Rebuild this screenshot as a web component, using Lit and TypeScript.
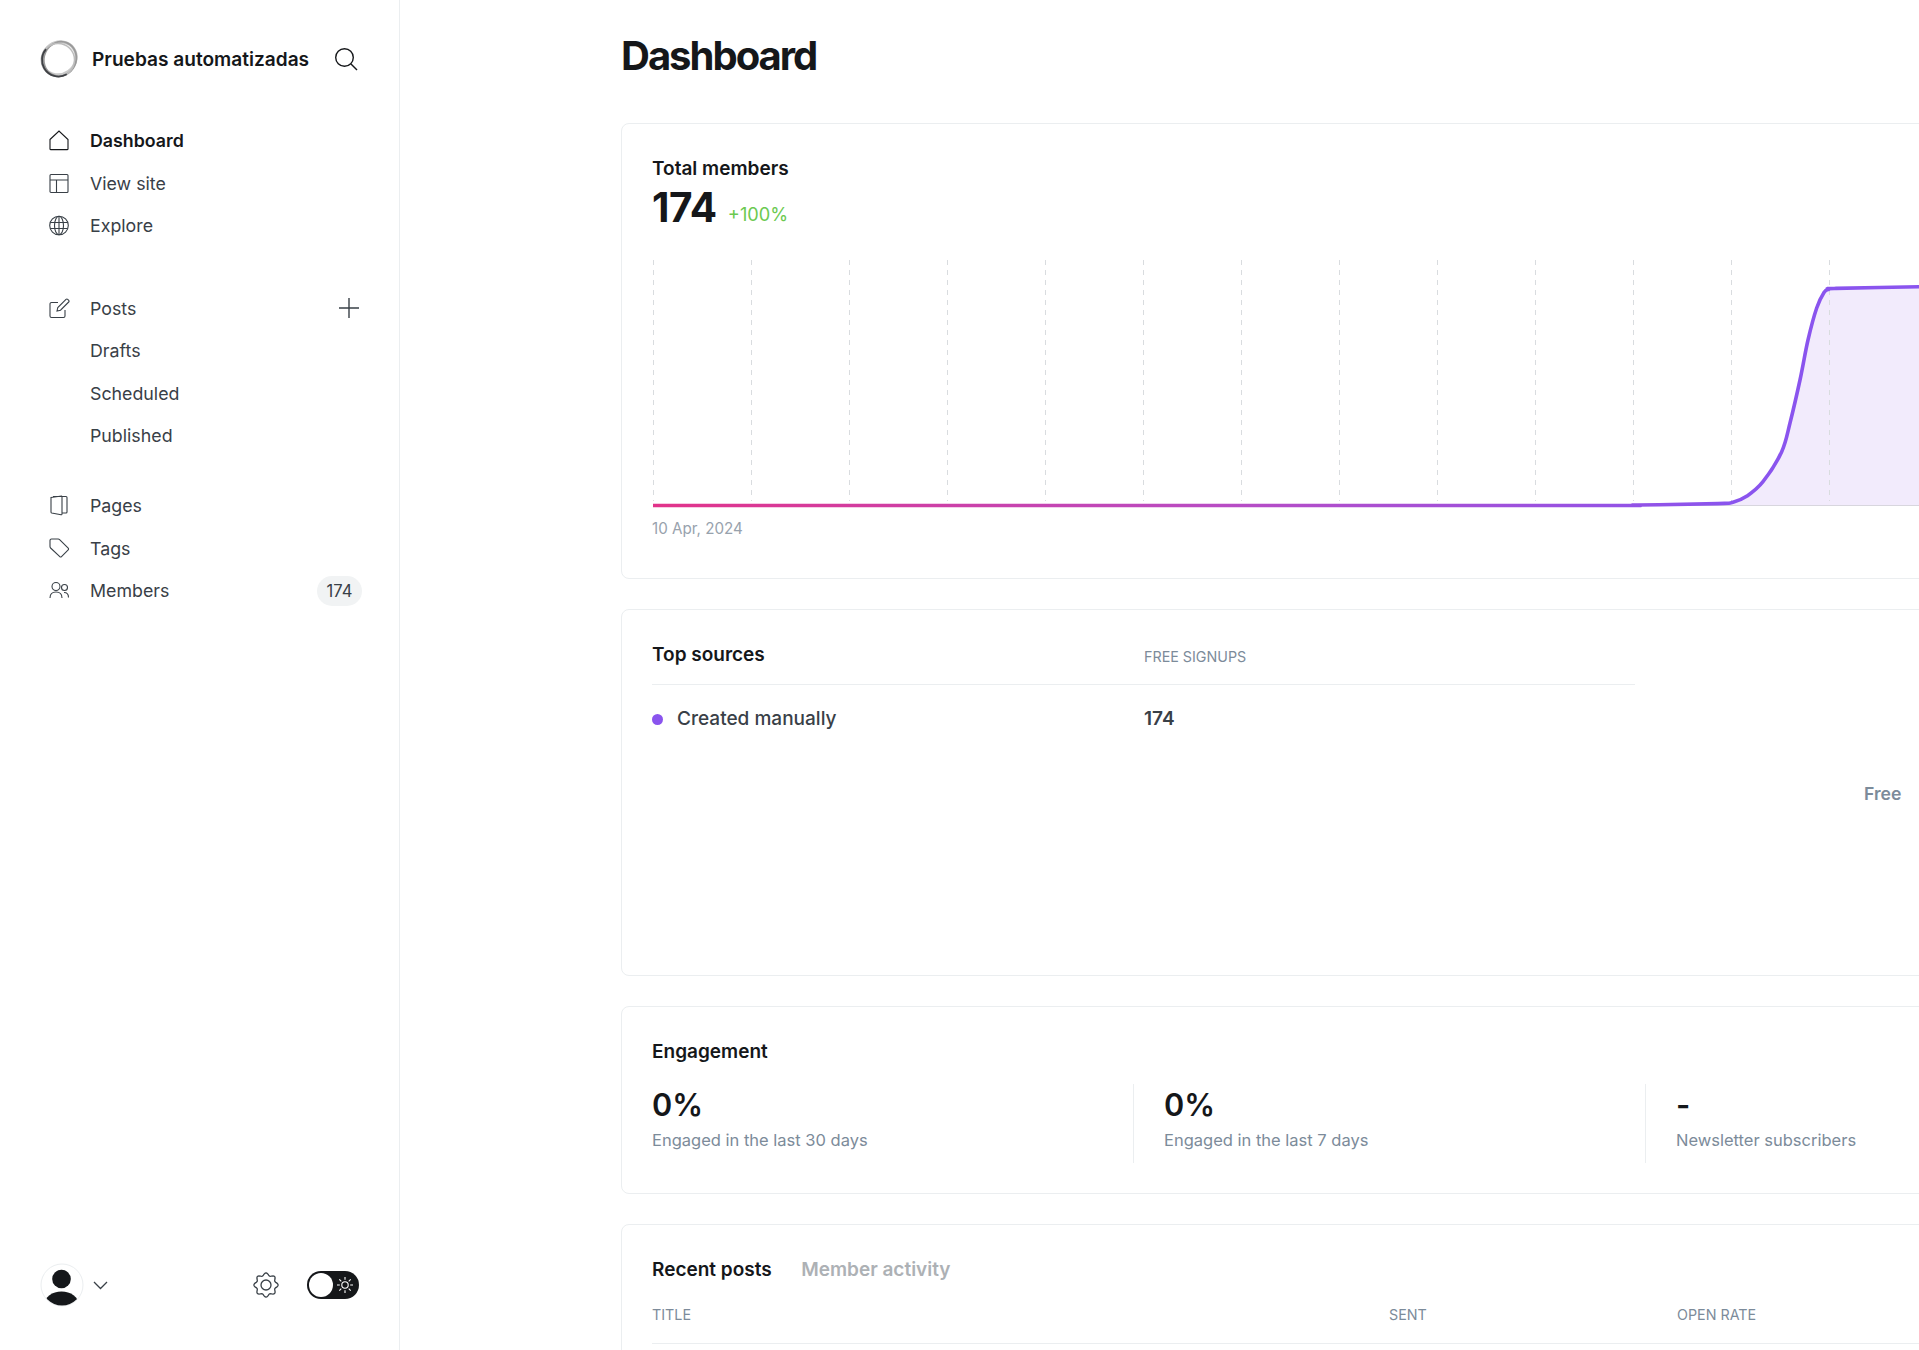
import { LitElement, html, css, svg } from "lit";
import { customElement } from "lit/decorators.js";

const GRID_X = [0, 98, 196, 294, 392, 490, 588, 686, 784, 882, 980, 1078, 1176];

// curve points read off the chart, x/y inside the svg
const POINTS: [number, number][] = [
  [0, 245.5],
  [890, 245.5],
  [985, 245],
  [1065, 243.6],
  [1080, 242.2],
  [1094, 236],
  [1110, 221.7],
  [1128.7, 191.7],
  [1137, 163],
  [1147, 120],
  [1155, 80],
  [1163.7, 48],
  [1171, 32.5],
  [1176, 29.2],
  [1183, 28.4],
  [1270, 26.7],
];

function smooth(pts: [number, number][]) {
  let d = `M${pts[0][0]} ${pts[0][1]}`;
  for (let i = 0; i < pts.length - 1; i++) {
    const p0 = pts[i - 1] ?? pts[i];
    const p1 = pts[i];
    const p2 = pts[i + 1];
    const p3 = pts[i + 2] ?? p2;
    const c1x = p1[0] + (p2[0] - p0[0]) / 6;
    const c1y = p1[1] + (p2[1] - p0[1]) / 6;
    const c2x = p2[0] - (p3[0] - p1[0]) / 6;
    const c2y = p2[1] - (p3[1] - p1[1]) / 6;
    d += ` C${c1x.toFixed(1)} ${c1y.toFixed(1)} ${c2x.toFixed(1)} ${c2y.toFixed(1)} ${p2[0]} ${p2[1]}`;
  }
  return d;
}

const LINE = smooth(POINTS);
const AREA = `${LINE} L1270 245.5 L1078 245.5 Z`;

function gearPath() {
  const pts: string[] = [];
  for (let i = 0; i < 96; i++) {
    const a = (i / 96) * Math.PI * 2;
    const r = 10.8 + 1.3 * Math.cos(a * 8);
    pts.push(`${(13 + r * Math.sin(a)).toFixed(2)} ${(13 - r * Math.cos(a)).toFixed(2)}`);
  }
  return `M${pts.join("L")}Z`;
}

const icons = {
  home: svg`<path d="M1 9.5 10 1l9 8.5V19a.6.6 0 0 1-.6.6H1.600A.6.6 0 0 1 1 19Z"/>`,
  site: svg`<rect x="1" y="1.500" width="18" height="18" rx="1"/><path d="M1 7h18M7.500 7v12.500"/>`,
  globe: svg`<circle cx="10" cy="10.500" r="9.300"/><ellipse cx="10" cy="10.500" rx="4.500" ry="9.300"/><path d="M10 1.200v18.600M1.300 7.500h17.400M1.300 13.500h17.400"/>`,
  post: svg`<path d="M16 12v6a1.500 1.500 0 0 1-1.500 1.500h-12A1.500 1.500 0 0 1 1 18V6a1.500 1.500 0 0 1 1.500-1.500H9"/><path d="M8 13l.8-3.500L17 1.300a1.200 1.200 0 0 1 1.700 0l1 1a1.200 1.200 0 0 1 0 1.700L11.500 12.200Z"/>`,
  page: svg`<path d="M2 2.500 12.500 1a.8.8 0 0 1 .5.800V19a.7.7 0 0 1-.9.700L2.700 18a1 1 0 0 1-.7-1Z"/><path d="M4 1.500h13a1 1 0 0 1 1 1V17a1 1 0 0 1-1 1h-4"/>`,
  tag: svg`<path d="M1 2.500A1.500 1.500 0 0 1 2.500 1h6.700a2 2 0 0 1 1.400.6l8.600 8.600a1.200 1.200 0 0 1 0 1.700l-6.700 6.700a1.200 1.200 0 0 1-1.700 0L1.600 10A2 2 0 0 1 1 8.600Z"/>`,
  members: svg`<circle cx="7" cy="6.500" r="4"/><path d="M1 18c0-4 2.500-6 6-6s6 2 6 6"/><circle cx="15.500" cy="7.500" r="3"/><path d="M15 12.500c2.800 0 4.500 1.800 4.500 5"/>`,
};

@customElement("app-root")
export class AppRoot extends LitElement {
  static styles = css`
    :host {
      display: flex;
      height: 100vh;
      overflow: hidden;
      background: #fff;
      font-family: Inter, "Liberation Sans", sans-serif;
      color: #15171a;
    }
    .side {
      flex: none;
      width: 400px;
      box-sizing: border-box;
      height: 100%;
      border-right: 1px solid #ebeef0;
      display: flex;
      flex-direction: column;
      padding: 38px 40px 0 40px;
    }
    .brand {
      display: flex;
      align-items: center;
      height: 42px;
      margin-bottom: 39.5px;
    }
    .brand svg.logo {
      flex: none;
      margin-right: 14px;
    }
    .brand span {
      flex: 1;
      font-size: 19.1px;
      font-weight: 600;
      white-space: nowrap;
    }
    .nav-group {
      margin-bottom: 40.6px;
    }
    .nav-group.tight {
      margin-bottom: 27.8px;
    }
    .row {
      display: flex;
      align-items: center;
      height: 42.4px;
      font-size: 17.8px;
      color: #394047;
    }
    .row.active {
      color: #15171a;
      font-weight: 600;
    }
    .row svg.ico {
      flex: none;
      width: 21px;
      height: 21px;
      margin: 0 20px 0 9px;
      fill: none;
      stroke: #394047;
      stroke-width: 1.1;
      overflow: visible;
    }
    .row.active svg.ico {
      stroke: #15171a;
    }
    .row.sub {
      padding-left: 50px;
    }
    .row .grow {
      flex: 1;
    }
    .plus {
      margin-right: -0.5px;
    }
    .badge {
      background: #f1f3f4;
      color: #394047;
      font-size: 16.6px;
      height: 30px;
      line-height: 30px;
      padding: 0 9.5px;
      border-radius: 15px;
      margin-right: -3px;
    }
    .search {
      margin-right: 1px;
    }
    .foot {
      margin-top: auto;
      height: 44px;
      margin-bottom: 43px;
      display: flex;
      align-items: center;
    }
    .foot .chev {
      margin-left: 9px;
      flex: 1;
    }
    .toggle {
      flex: none;
      width: 52px;
      height: 28px;
      margin-left: 28px;
      background: #15171a;
      border-radius: 14px;
      display: flex;
      align-items: center;
      justify-content: space-between;
      padding: 0 6px 0 2px;
      box-sizing: border-box;
    }
    .knob {
      width: 24px;
      height: 24px;
      border-radius: 50%;
      background: #fff;
    }
    .main {
      flex: none;
      width: 1480px;
      box-sizing: border-box;
      padding: 32px 0 0 221px;
    }
    h1 {
      margin: 0 0 43px;
      font-size: 40px;
      line-height: 48px;
      font-weight: 700;
      letter-spacing: -0.05em;
    }
    .card {
      box-sizing: border-box;
      width: 1500px;
      border: 1px solid #ebeef0;
      border-radius: 8px;
      margin-bottom: 30px;
      padding: 32px 30px 0;
    }
    .c1 { height: 456px; padding-top: 33px; }
    .c2 { height: 367px; position: relative; }
    .c3 { height: 188px; padding-top: 33px; }
    .c4 { height: 300px; padding-top: 33px; }
    h3 {
      margin: 0;
      font-size: 19px;
      line-height: 24px;
      font-weight: 600;
    }
    .big {
      display: flex;
      align-items: baseline;
      margin-top: 3px;
      height: 48px;
      font-size: 40.5px;
      font-weight: 700;
      line-height: 48px;
      letter-spacing: -0.01em;
    }
    .big small {
      margin-left: 11px;
      font-size: 18.2px;
      font-weight: 400;
      letter-spacing: 0;
      color: #6bc950;
      position: relative;
      top: -1px;
    }
    .chart {
      display: block;
      margin: 28px 0 0 1px;
      overflow: visible;
    }
    .date {
      margin-top: 12px;
      font-size: 15.2px;
      line-height: 22px;
      color: #98a2ad;
    }
    .src-head {
      display: grid;
      grid-template-columns: 492px 491px;
      width: 983px;
      height: 41px;
      align-items: start;
      border-bottom: 1px solid #ebeef0;
      margin-top: 1px;
    }
    .col-label {
      font-size: 14.3px;
      line-height: 24px;
      color: #7c8b9a;
      margin-top: 2px;
      text-transform: uppercase;
    }
    .src-row {
      display: grid;
      grid-template-columns: 492px 491px;
      width: 983px;
      height: 66px;
      align-items: center;
      font-size: 19.05px;
      color: #394047;
    }
    .src-name {
      display: flex;
      align-items: center;
      font-weight: 500;
    }
    .dot {
      width: 11px;
      height: 11px;
      border-radius: 50%;
      background: #8a54ee;
      margin-right: 14px;
      position: relative;
      top: 1px;
    }
    .num {
      font-weight: 600;
    }
    .legend {
      position: absolute;
      left: 1242px;
      top: 172px;
      font-size: 17.6px;
      font-weight: 600;
      line-height: 24px;
      color: #7c8b9a;
    }
    .stats {
      display: flex;
      margin-top: 20px;
    }
    .stat {
      flex: none;
      box-sizing: border-box;
      width: 512px;
      height: 79px;
      padding-left: 30px;
      border-left: 1px solid #ebeef0;
    }
    .stat:first-child {
      width: 481px;
      padding-left: 0;
      border-left: none;
    }
    .stat b {
      display: block;
      font-size: 30.7px;
      line-height: 40px;
      font-weight: 600;
      margin-top: 1px;
    }
    .stat span {
      display: block;
      margin-top: 3px;
      font-size: 16.5px;
      line-height: 24px;
      color: #7c8b9a;
    }
    .tabs {
      display: flex;
      gap: 29.5px;
      font-size: 19px;
      line-height: 24px;
      font-weight: 600;
    }
    .tabs .off {
      color: #adb1b5;
    }
    .thead {
      display: grid;
      grid-template-columns: 737px 288px 1fr;
      margin-top: 21px;
      height: 40px;
      border-bottom: 1px solid #ebeef0;
    }
    .thead .col-label {
      margin-top: 0;
    }
  `;

  private row(icon: unknown, label: string, active = false, tail?: unknown) {
    return html`<div class="row ${active ? "active" : ""}">
      <svg class="ico" viewBox="0 0 21 21">${icon}</svg>
      <span class="grow">${label}</span>${tail ?? ""}
    </div>`;
  }

  render() {
    return html`
      <aside class="side">
        <div class="brand">
          <svg class="logo" width="38" height="38" viewBox="0 0 38 38" fill="none" style="overflow:visible">
            <ellipse cx="19.500" cy="18.500" rx="17.500" ry="16" stroke="#c9c9c9" stroke-width="3" transform="rotate(-35 19 19)" />
            <ellipse cx="20" cy="18.500" rx="16" ry="17.500" stroke="#9a9a9a" stroke-width="1.800" transform="rotate(25 19 19)" />
            <circle cx="18" cy="20" r="16.500" stroke="#bdbdbd" stroke-width="1.500" />
            <circle cx="18.500" cy="20" r="16.500" stroke="#3f4145" stroke-width="1.800" stroke-dasharray="46 64" transform="rotate(60 18.500 20)" />
          </svg>
          <span>Pruebas automatizadas</span>
          <svg class="search" width="24" height="24" viewBox="0 0 24 24" fill="none" stroke="#15171a" stroke-width="1.400">
            <circle cx="10.500" cy="10.500" r="8.800" />
            <path d="M17 17l6 6" />
          </svg>
        </div>
        <div class="nav-group">
          ${this.row(icons.home, "Dashboard", true)} ${this.row(icons.site, "View site")}
          ${this.row(icons.globe, "Explore")}
        </div>
        <div class="nav-group tight">
          ${this.row(
            icons.post,
            "Posts",
            false,
            html`<svg class="plus" width="22" height="22" viewBox="0 0 22 22" stroke="#394047" stroke-width="1.400"><path d="M11 1v20M1 11h20" /></svg>`
          )}
          <div class="row sub">Drafts</div>
          <div class="row sub">Scheduled</div>
          <div class="row sub">Published</div>
        </div>
        <div class="nav-group">
          ${this.row(icons.page, "Pages")} ${this.row(icons.tag, "Tags")}
          ${this.row(icons.members, "Members", false, html`<span class="badge">174</span>`)}
        </div>
        <div class="foot">
          <svg width="44" height="44" viewBox="0 0 44 44">
            <defs><clipPath id="av"><circle cx="22" cy="22" r="20.500" /></clipPath></defs>
            <circle cx="22" cy="22" r="21" fill="#fff" stroke="#ebeef0" />
            <circle cx="21.500" cy="16" r="9.300" fill="#15171a" />
            <ellipse cx="21.500" cy="41" rx="17" ry="12.500" fill="#15171a" clip-path="url(#av)" />
          </svg>
          <svg class="chev" width="15" height="9" viewBox="0 0 15 9" fill="none" stroke="#394047" stroke-width="1.300" preserveAspectRatio="xMinYMid meet">
            <path d="M1 1l6.500 6.500L14 1" />
          </svg>
          <svg width="26" height="26" viewBox="0 0 26 26" fill="none" stroke="#394047" stroke-width="1.300">
            <path d="${gearPath()}" />
            <circle cx="13" cy="13" r="5" />
          </svg>
          <div class="toggle">
            <div class="knob"></div>
            <svg width="16" height="16" viewBox="0 0 16 16" fill="none" stroke="#fff" stroke-width="1.100">
              <circle cx="8" cy="8" r="3.200" />
              <path d="M8 0v2.800M8 13.200V16M0 8h2.800M13.200 8H16M2.300 2.300l2 2M11.700 11.700l2 2M2.300 13.700l2-2M11.700 4.300l2-2" />
            </svg>
          </div>
        </div>
      </aside>
      <main class="main">
        <h1>Dashboard</h1>
        <section class="card c1">
          <h3>Total members</h3>
          <div class="big">174<small>+100%</small></div>
          <svg class="chart" width="1270" height="246" viewBox="0 0 1270 246" fill="none">
            <defs>
              <linearGradient id="ln" gradientUnits="userSpaceOnUse" x1="0" y1="0" x2="1266" y2="0">
                <stop offset="0" stop-color="#e2338a" />
                <stop offset="0.45" stop-color="#b84cc4" />
                <stop offset="0.85" stop-color="#8a54ee" />
              </linearGradient>
            </defs>
            <path d="${AREA}" fill="#f2ebfc" />
            <path d="M0 245.500H1270" stroke="#d8d6de" stroke-width="1" />
            ${GRID_X.map(
              (x) => svg`<path d="M${x + 0.5} 0V241" stroke="#d9dcdf" stroke-width="1" stroke-dasharray="5 5" />`
            )}
            <path d="${LINE}" stroke="url(#ln)" stroke-width="3.600" />
          </svg>
          <div class="date">10 Apr, 2024</div>
        </section>
        <section class="card c2">
          <div class="src-head">
            <h3>Top sources</h3>
            <div class="col-label">Free signups</div>
          </div>
          <div class="src-row">
            <div class="src-name"><i class="dot"></i>Created manually</div>
            <div class="num">174</div>
          </div>
          <div class="legend">Free</div>
        </section>
        <section class="card c3">
          <h3>Engagement</h3>
          <div class="stats">
            <div class="stat"><b>0%</b><span>Engaged in the last 30 days</span></div>
            <div class="stat"><b>0%</b><span>Engaged in the last 7 days</span></div>
            <div class="stat"><b>-</b><span>Newsletter subscribers</span></div>
          </div>
        </section>
        <section class="card c4">
          <div class="tabs"><span>Recent posts</span><span class="off">Member activity</span></div>
          <div class="thead">
            <div class="col-label">Title</div>
            <div class="col-label">Sent</div>
            <div class="col-label">Open rate</div>
          </div>
        </section>
      </main>
    `;
  }
}
